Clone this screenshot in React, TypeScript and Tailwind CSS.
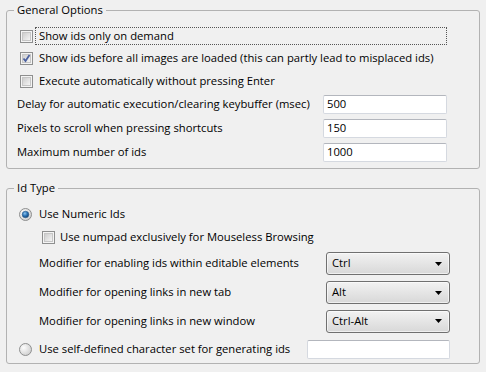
import React from "react";

const font = { fontFamily: '"Open Sans", "Noto Sans", sans-serif' };

function Check({ checked = false }: { checked?: boolean }) {
  return (
    <svg width="13" height="13" viewBox="0 0 13 13" className="shrink-0">
      <defs>
        <linearGradient id={checked ? "cbgc" : "cbg"} x1="0" y1="0" x2="1" y2="1">
          <stop offset="0" stopColor="#cbcbcb" />
          <stop offset="1" stopColor="#f7f7f7" />
        </linearGradient>
      </defs>
      <rect x="0.5" y="0.5" width="12" height="12" fill="#f4f4f4" stroke="#8e8f8f" />
      <rect x="2.5" y="2.5" width="8" height="8" fill={`url(#${checked ? "cbgc" : "cbg"})`} stroke="#c6c6c6" />
      {checked && (
        <path d="M3.5 6.5 L5.5 9 L9.5 3" fill="none" stroke="#4c61a0" strokeWidth="1.8" />
      )}
    </svg>
  );
}

function Radio({ checked = false }: { checked?: boolean }) {
  return (
    <svg width="13" height="13" viewBox="0 0 13 13" className="shrink-0">
      <defs>
        <radialGradient id="rbg" cx="0.35" cy="0.35" r="0.7">
          <stop offset="0" stopColor="#fdfdfd" />
          <stop offset="1" stopColor="#cfcfcf" />
        </radialGradient>
        <radialGradient id="rdot" cx="0.4" cy="0.35" r="0.7">
          <stop offset="0" stopColor="#8fc5ee" />
          <stop offset="0.5" stopColor="#2a74b8" />
          <stop offset="1" stopColor="#0f3a66" />
        </radialGradient>
      </defs>
      <circle cx="6.5" cy="6.5" r="6" fill="url(#rbg)" stroke="#8e8f8f" />
      {checked && <circle cx="6.5" cy="6.5" r="3.3" fill="url(#rdot)" stroke="#2d5e8e" strokeWidth="0.6" />}
    </svg>
  );
}

function TextBox({ value, w = "w-[124px]", h = "h-[19px]" }: { value: string; w?: string; h?: string }) {
  return (
    <div
      className={`${w} ${h} shrink-0 bg-white border border-[#d5d9e0] border-t-[#b3b6bd] rounded-[2px] pl-[3px] flex items-center leading-none text-black`}
    >
      {value}
    </div>
  );
}

function Select({ value }: { value: string }) {
  return (
    <div className="w-[124px] h-[23px] rounded-[3px] border border-[#707070] bg-gradient-to-b from-[#f2f2f2] to-[#d8d8d8] flex items-center pl-[5px] pr-[7px] shadow-[inset_0_0_0_1px_rgba(255,255,255,0.6)]">
      <span className="flex-1 text-black">{value}</span>
      <svg width="7" height="4" viewBox="0 0 7 4">
        <path d="M0 0 H7 L3.5 4 Z" fill="#000" />
      </svg>
    </div>
  );
}

export default function App() {
  return (
    <div className="w-[486px] h-[372px] bg-[#f0f0f0] pt-[2px] px-[6px] text-[11.25px] text-black whitespace-nowrap" style={font}>
      <fieldset className="border border-[#b2b2b2] rounded-[3px] h-[167px] px-0 m-0">
        <legend className="ml-[7px] px-[3px] leading-[16px]">General Options</legend>
        <div className="pt-[7px]">
          <div className="h-[22px] flex items-center pl-[13px]">
            <Check />
            <span className="ml-[2px] pl-[3px] h-[18px] flex items-center w-[412px] border border-dotted border-[#555]">
              Show ids only on demand
            </span>
          </div>
          <div className="h-[23px] flex items-center pl-[13px]">
            <Check checked />
            <span className="ml-[6px]">Show ids before all images are loaded (this can partly lead to misplaced ids)</span>
          </div>
          <div className="h-[22px] flex items-center pl-[13px]">
            <Check />
            <span className="ml-[6px]">Execute automatically without pressing Enter</span>
          </div>
          <div className="h-[24px] grid grid-cols-[306px_124px] items-center pl-[10px]">
            <span>Delay for automatic execution/clearing keybuffer (msec)</span>
            <TextBox value="500" />
          </div>
          <div className="h-[24px] grid grid-cols-[306px_124px] items-center pl-[10px]">
            <span>Pixels to scroll when pressing shortcuts</span>
            <TextBox value="150" />
          </div>
          <div className="h-[24px] grid grid-cols-[306px_124px] items-center pl-[10px]">
            <span>Maximum number of ids</span>
            <TextBox value="1000" />
          </div>
        </div>
      </fieldset>

      <fieldset className="border border-[#b2b2b2] rounded-[3px] h-[184px] mt-[11px] px-0 m-0">
        <legend className="ml-[7px] px-[3px] leading-[16px]">Id Type</legend>
        <div className="pt-[7px]">
          <div className="h-[22px] flex items-center pl-[12px]">
            <Radio checked />
            <span className="ml-[7px]">Use Numeric Ids</span>
          </div>
          <div className="h-[24px] flex items-center pl-[35px]">
            <Check />
            <span className="ml-[5px]">Use numpad exclusively for Mouseless Browsing</span>
          </div>
          <div className="h-[29px] grid grid-cols-[287px_124px] items-center pl-[32px]">
            <span>Modifier for enabling ids within editable elements</span>
            <Select value="Ctrl" />
          </div>
          <div className="h-[29px] grid grid-cols-[287px_124px] items-center pl-[32px]">
            <span>Modifier for opening links in new tab</span>
            <Select value="Alt" />
          </div>
          <div className="h-[28px] grid grid-cols-[287px_124px] items-center pl-[32px]">
            <span>Modifier for opening links in new window</span>
            <Select value="Ctrl-Alt" />
          </div>
          <div className="h-[28px] flex items-center pl-[12px]">
            <Radio />
            <span className="ml-[7px] w-[268px]">Use self-defined character set for generating ids</span>
            <TextBox value="" w="w-[143px]" h="h-[19px]" />
          </div>
        </div>
      </fieldset>
    </div>
  );
}
